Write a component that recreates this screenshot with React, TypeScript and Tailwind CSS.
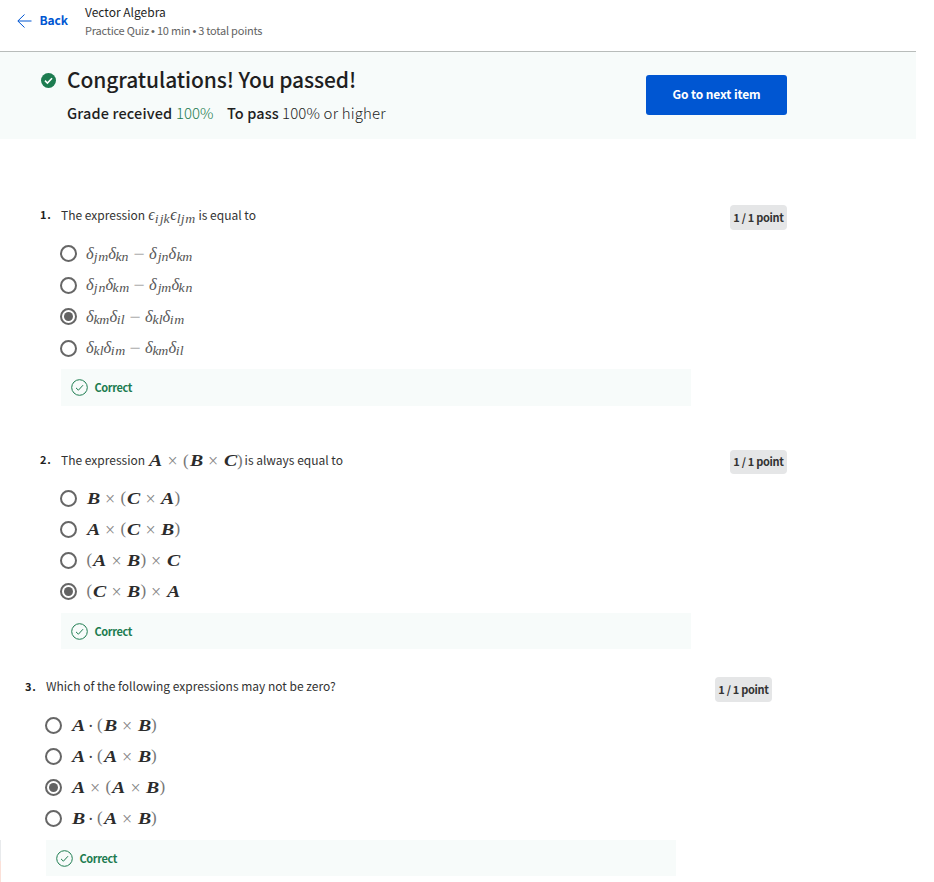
import React from "react";

const glyphWidths: Record<string, string> = {
  A: "w-[14px]", B: "w-[14px]", C: "w-[14px]",
  "×": "w-[20px]", "(": "w-[6.5px]", ")": "w-[5.5px]", "·": "w-[11.5px]",
  i: "w-[4px]", j: "w-[5px]", k: "w-[6.2px]", l: "w-[3.8px]", m: "w-[9.8px]", n: "w-[7px]",
  δ: "w-[7.5px]", ϵ: "w-[6.8px]", "−": "w-[20.2px]",
};

function glyphStyle(c: string) {
  if (/[A-C]/.test(c)) return "left-[0.2px] scale-x-[1.2] text-[16.5px] font-bold italic text-[#2c2c2c]";
  if (c === "×") return "text-[18px] text-[#858585]";
  if (c === "−") return "scale-x-110 text-[18px] text-[#aaa]";
  if (c === "·") return "text-[18px] text-[#444]";
  if (/[()]/.test(c)) return "-top-[0.5px] text-[17px] text-[#777]";
  if (c === "ϵ") return "-top-[1px] text-[16px] italic text-[#444]";
  if (c === "δ") return "text-[16.5px] italic text-[#5a5a5a]";
  return "top-[3px] scale-x-[1.15] text-[12px] italic text-[#555]";
}

function Formula({ value }: { value: string }) {
  return (
    <span className="flex h-5 shrink-0 items-center font-['Liberation_Serif',serif] leading-5">
      {value.split("").map((c, i) => (
        <span key={i} className={`flex h-5 shrink-0 justify-center ${glyphWidths[c]}`}>
          <span className={`relative block origin-center leading-5 ${glyphStyle(c)}`}>{c}</span>
        </span>
      ))}
    </span>
  );
}

function Radio({ checked }: { checked: boolean }) {
  return (
    <span className="flex size-[17px] shrink-0 items-center justify-center rounded-full border-2 border-[#666] bg-white">
      {checked && <span className="size-[9px] rounded-full bg-[#636363]" />}
    </span>
  );
}

type QuestionProps = {
  number: string;
  prompt: React.ReactNode;
  options: string[];
  selected: number;
  className: string;
  rowClass: string;
  badgeClass: string;
  feedbackClass: string;
};

function Question({ number, prompt, options, selected, className, rowClass, badgeClass, feedbackClass }: QuestionProps) {
  return (
    <section className={`flex w-[747px] justify-between ${className}`}>
      <div className="w-[651px]">
        <div className="flex h-6 items-center text-[12px] text-[#333]">
          <span className="w-[21px] shrink-0 pb-[3px] text-[11px] font-bold tracking-[0.8px] text-[#1f1f1f]">{number}</span>
          {prompt}
        </div>
        <div className="ml-5 mt-[10px]">
          {options.map((o, i) => (
            <div key={o} className={`flex items-center gap-[9px] ${rowClass}`}>
              <Radio checked={i === selected} />
              <Formula value={o} />
            </div>
          ))}
        </div>
        <div className={`ml-[21px] flex w-[630px] items-center bg-[#f7fbfa] pl-[10px] text-[#1d7c50] ${feedbackClass}`}>
          <svg width="17" height="17" viewBox="0 0 17 17" fill="none" stroke="currentColor">
            <circle cx="8.5" cy="8.5" r="7.8" strokeWidth="1" />
            <path d="M5 8.9l2.4 2.3L12 6.2" strokeWidth="1" />
          </svg>
          <span className="ml-[6.5px] text-[11px] font-bold tracking-[-0.4px]">Correct</span>
        </div>
      </div>
      <div className={`flex w-[57px] items-center justify-center whitespace-nowrap rounded-[4px] bg-[#e5e6e7] text-[11px] font-bold tracking-[-0.3px] text-[#333] ${badgeClass}`}>
        1 / 1 point
      </div>
    </section>
  );
}

function Text({ children }: { children: React.ReactNode }) {
  return <span className="relative -top-px">{children}</span>;
}

function Bullet() {
  return <span className="inline-block w-[8px] text-center font-['Liberation_Sans',sans-serif] text-[11px]">•</span>;
}

export default function App() {
  return (
    <div className="relative h-[882px] w-[934px] overflow-hidden whitespace-nowrap bg-white font-['Noto_Sans_CJK_SC','Noto_Sans',sans-serif] text-[#1f1f1f]">
      <header className="flex h-[52px] w-[916px] border-b border-[#b8bcba] pl-[17px]">
        <div className="flex h-[41px] w-[68px] items-center text-[#0056d2]">
          <svg width="15" height="14" viewBox="0 0 15 14" fill="none" stroke="currentColor" strokeWidth="1">
            <path d="M7.5 .5L.8 7l6.7 6.5M1 7h13.5" />
          </svg>
          <span className="ml-[7.5px] pb-[2px] text-[12px] font-bold tracking-[-0.1px]">Back</span>
        </div>
        <div className="pt-[3px]">
          <div className="h-[18px] text-[12px] leading-[18px]">Vector Algebra</div>
          <div className="h-[18px] text-[11px] leading-[18px] tracking-[-0.22px] text-[#636363]">
            Practice Quiz<Bullet />10 min<Bullet />3 total points
          </div>
        </div>
      </header>
      <div className="flex h-[87px] w-[916px] bg-[#f7fbfa] pl-[41px]">
        <svg className="mt-[21px] shrink-0" width="15" height="15" viewBox="0 0 15 15">
          <circle cx="7.5" cy="7.5" r="7.5" fill="#1d7c50" />
          <path d="M4 7.7l2.4 2.3L11 5.2" fill="none" stroke="#fff" strokeWidth="1.6" />
        </svg>
        <div className="ml-[11px] w-[579px] pt-[12px]">
          <div className="h-[33px] text-[21px] font-medium leading-[31px] tracking-[-0.1px]">Congratulations! You passed!</div>
          <div className="flex h-[32px] text-[15px] font-light leading-[32px]">
            <span className="w-[109px] text-[14.5px] font-medium tracking-[0.15px]">Grade received</span>
            <span className="w-[51px] text-[#1d7c50]">100%</span>
            <span className="w-[55px] text-[14.5px] font-medium tracking-[0.1px]">To pass</span>
            <span className="tracking-[0.15px]">100% or higher</span>
          </div>
        </div>
        <button className="mt-[23px] h-10 w-[141px] rounded-[3px] bg-[#0056d2] pb-[2px] text-[12px] font-bold tracking-[-0.1px] text-white">Go to next item</button>
      </div>
      <Question
        number="1."
        className="ml-10 mt-[65px] h-[246px]"
        rowClass="h-[31.5px]"
        badgeClass="mt-[1px] h-[25px]"
        feedbackClass="mt-[5px] h-[37px]"
        selected={2}
        prompt={<><Text>The expression</Text><span className="ml-[3px]"><Formula value="ϵijkϵljm" /></span><span className="relative -top-px ml-[3px]">is equal to</span></>}
        options={["δjmδkn−δjnδkm", "δjnδkm−δjmδkn", "δkmδil−δklδim", "δklδim−δkmδil"]}
      />
      <Question
        number="2."
        className="ml-10 -mt-[1px] h-[226px]"
        rowClass="h-[31px]"
        badgeClass="mt-[1px] h-[24px] pb-px"
        feedbackClass="mt-[6px] h-[36px]"
        selected={3}
        prompt={<><Text>The expression</Text><span className="ml-[3.5px]"><Formula value="A×(B×C)" /></span><span className="relative -top-px ml-[2px]">is always equal to</span></>}
        options={["B×(C×A)", "A×(C×B)", "(A×B)×C", "(C×B)×A"]}
      />
      <Question
        number="3."
        className="ml-[25px] mt-px h-[207px]"
        rowClass="h-[31px]"
        badgeClass="mt-[1px] h-[25px]"
        feedbackClass="mt-[6px] h-[36px]"
        selected={2}
        prompt={<span className="relative -top-[2px] tracking-[-0.01px]">Which of the following expressions may not be zero?</span>}
        options={["A·(B×B)", "A·(A×B)", "A×(A×B)", "B·(A×B)"]}
      />
      <div className="absolute bottom-0 left-0 h-[42px] w-px border-b-[21px] border-[#fbe0d8] bg-[#e8eaec]" />
    </div>
  );
}
